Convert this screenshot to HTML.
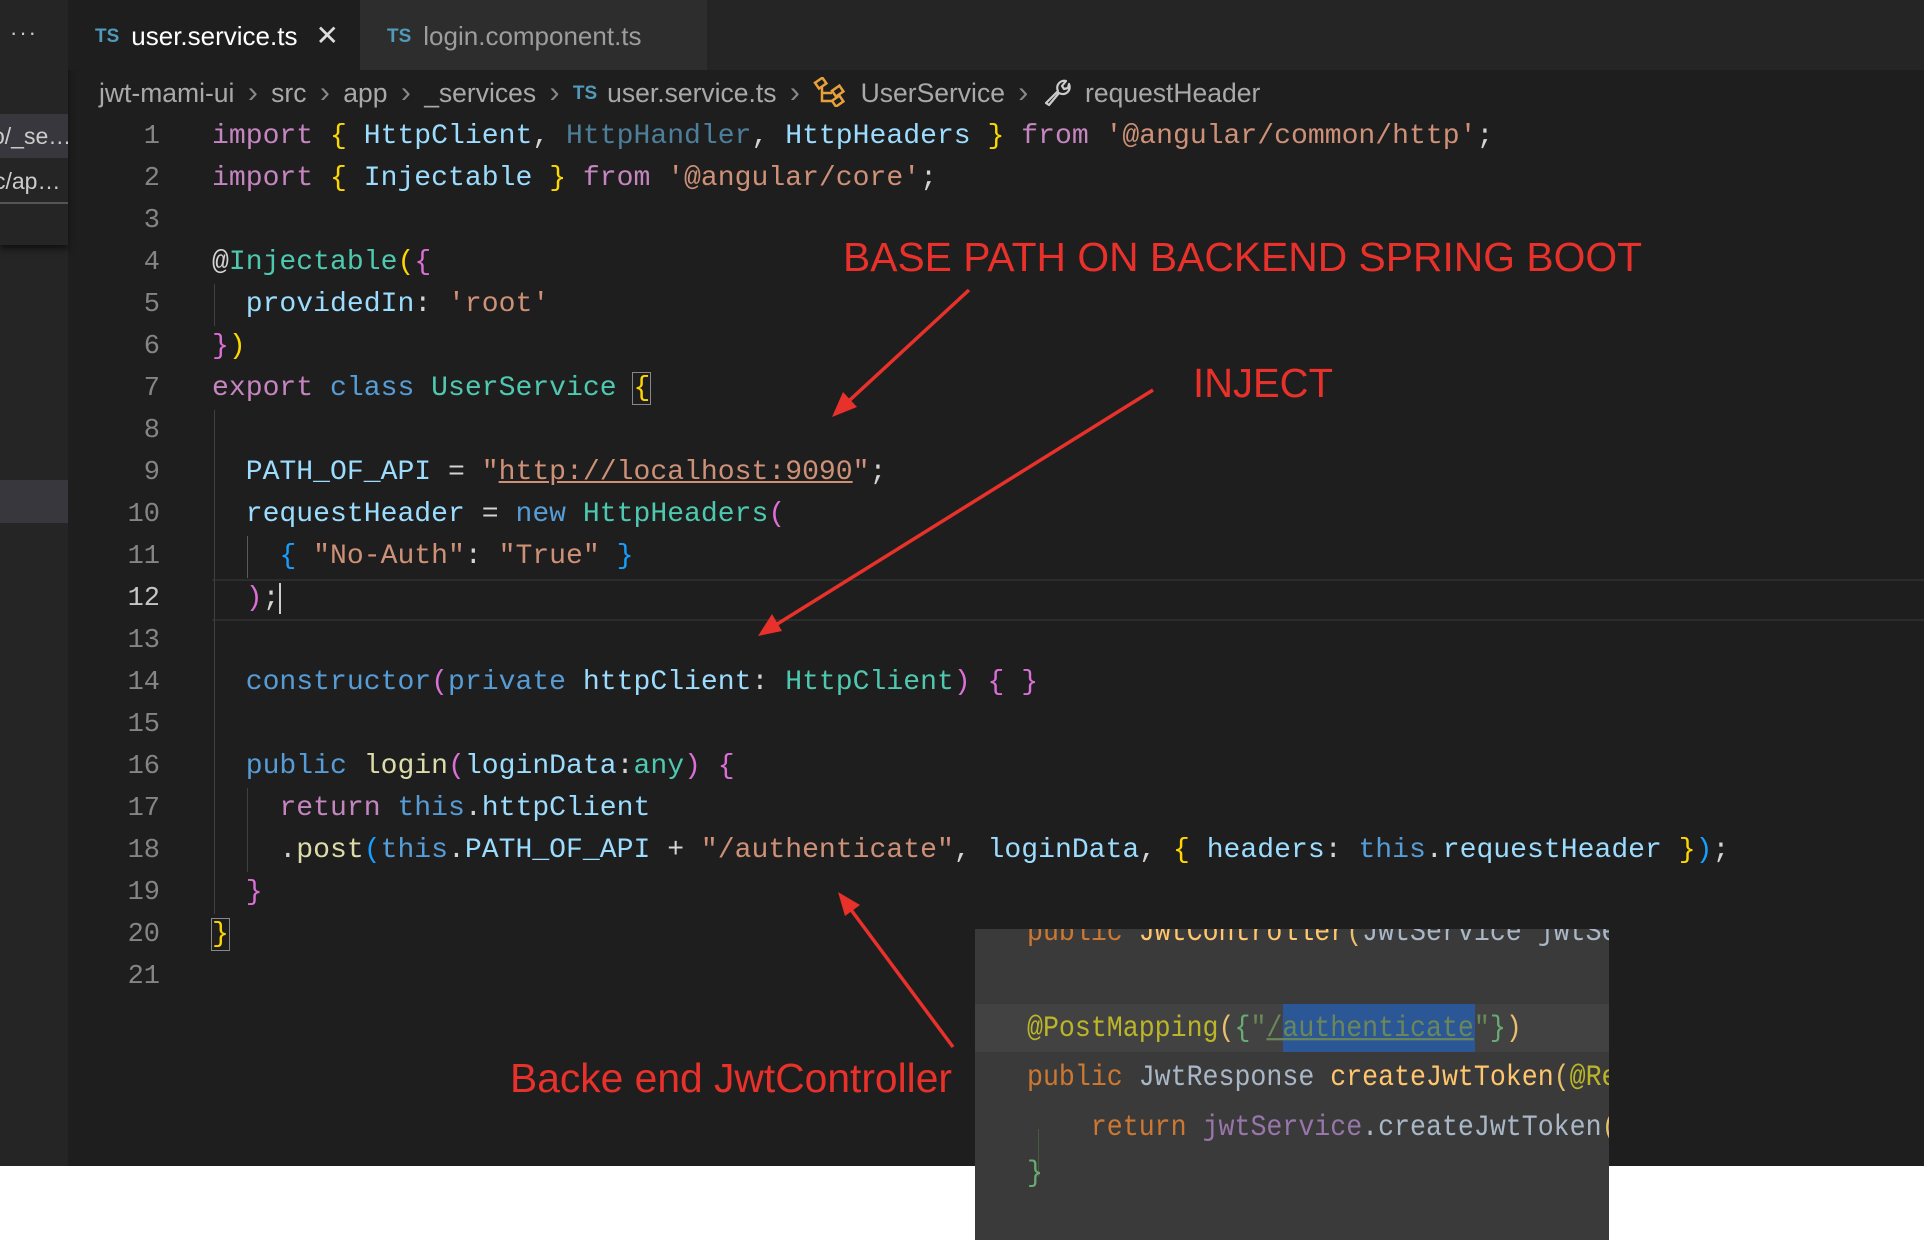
<!DOCTYPE html>
<html><head><meta charset="utf-8"><style>
*{margin:0;padding:0;box-sizing:border-box}
body{width:1924px;height:1259px;background:#fff;position:relative;overflow:hidden;font-family:"Liberation Sans",sans-serif}
.abs{position:absolute}
#dark{left:0;top:0;width:1924px;height:1166px;background:#1e1e1e}
#side{left:0;top:0;width:68px;height:1166px;background:#252526}
#tabs{left:68px;top:0;width:1856px;height:70px;background:#252526}
.tab{top:0;height:70px;font-size:26px;line-height:72px;padding-left:27px;white-space:nowrap}
.ts{color:#519aba;font-size:19px;font-weight:bold;margin-right:12px;position:relative;top:-3px}
.ln{position:absolute;left:100px;width:60px;text-align:right;font-family:"Liberation Mono",monospace;font-size:27px;color:#858585;height:42px;line-height:42px}
.cl{position:absolute;left:212px;font-family:"Liberation Mono",monospace;font-size:28.1px;color:#d4d4d4;height:42px;line-height:42px;white-space:pre}
.k{color:#c586c0}.y{color:#ffd700}.v{color:#9cdcfe}.c{color:#4ec9b0}.s{color:#ce9178}.b{color:#569cd6}.f{color:#dcdcaa}.p{color:#da70d6}.bl{color:#179fff}.d{color:#4d7f9b}
.g{position:absolute;width:1px;background:#404040}
#ov{left:975px;top:929px;width:634px;height:311px;background:#3a3a3a;overflow:hidden}
.oc{position:absolute;left:52px;font-family:"Liberation Mono",monospace;font-size:26.6px;white-space:pre;height:48px;line-height:48px;color:#a9b7c6;transform:scaleY(1.12);transform-origin:0 50%}
#code{position:absolute;left:0;top:3px;width:1924px;height:1000px}
</style></head><body>
<div id="dark" class="abs"></div>
<div id="side" class="abs">
 <div class="abs" style="left:0;top:0;width:68px;height:245px;background:#252526;box-shadow:0 4px 6px #111"></div>
 <div class="abs" style="left:10px;top:20px;color:#ccc;font-size:22px;letter-spacing:2px">···</div>
 <div class="abs" style="left:0;top:114px;width:68px;height:44px;background:#37373d;color:#ccc;font-size:23px;line-height:44px;white-space:nowrap;overflow:hidden;text-indent:-8px">o/_se…</div>
 <div class="abs" style="left:0;top:160px;width:68px;height:42px;color:#ccc;font-size:23px;line-height:42px;white-space:nowrap;overflow:hidden;text-indent:-6px">c/ap…</div>
 <div class="abs" style="left:0;top:202px;width:68px;height:2px;background:#555"></div>
 <div class="abs" style="left:0;top:480px;width:68px;height:43px;background:#37373d"></div>
</div>
<div id="tabs" class="abs">
 <div class="tab abs" style="left:0;width:292px;background:#1e1e1e;color:#fff"><span class="ts">TS</span>user.service.ts<span style="margin-left:18px;color:#ddd;font-size:28px">✕</span></div>
 <div class="tab abs" style="left:292px;width:347px;background:#2d2d2d;color:#9d9d9d"><span class="ts">TS</span>login.component.ts</div>
</div>
<div class="abs" style="left:99px;top:76px;font-size:26.5px;color:#a9a9a9;white-space:nowrap;line-height:34px;word-spacing:6px">jwt-mami-ui <span style="color:#888;font-size:30px">›</span> src <span style="color:#888;font-size:30px">›</span> app <span style="color:#888;font-size:30px">›</span> _services <span style="color:#888;font-size:30px">›</span> <span class="ts" style="font-size:19px;margin-right:10px">TS</span>user.service.ts <span style="color:#888;font-size:30px">›</span> <svg width="34" height="30" viewBox="0 0 34 30" style="vertical-align:-5px"><g fill="none" stroke="#e8a13a" stroke-width="2.5"><rect x="3" y="3" width="9" height="7" transform="rotate(-35 7 6)"/><rect x="20" y="11" width="9" height="7" transform="rotate(-35 24 14)"/><rect x="20" y="21" width="9" height="7" transform="rotate(-35 24 24)"/><path d="M9 10 V24 H19 M9 16 H19"/></g></svg> UserService <span style="color:#888;font-size:30px">›</span> <svg width="30" height="30" viewBox="0 0 30 30" style="vertical-align:-5px"><path d="M4 26 L16 14 A7 7 0 0 1 24 4 L20 9 L22 12 L26 11 L27 7 A7 7 0 0 1 17 16 L7 28 Z" fill="none" stroke="#ccc" stroke-width="2.2" stroke-linejoin="round"/></svg> requestHeader</div>

<div id="code">
<div class="abs" style="left:212px;top:576px;width:1712px;height:42px;border-top:2px solid #2c2c2c;border-bottom:2px solid #2c2c2c"></div>
<div class="g" style="left:214px;top:281px;height:42px"></div>
<div class="g" style="left:214px;top:407px;height:504px"></div>
<div class="g" style="left:247px;top:533px;height:42px;background:#5a5a5a"></div>
<div class="g" style="left:247px;top:785px;height:84px"></div>

<div class="ln" style="top:113px">1</div><div class="cl" style="top:113px"><span class="k">import</span> <span class="y">{</span> <span class="v">HttpClient</span>, <span class="d">HttpHandler</span>, <span class="v">HttpHeaders</span> <span class="y">}</span> <span class="k">from</span> <span class="s">'@angular/common/http'</span>;</div>
<div class="ln" style="top:155px">2</div><div class="cl" style="top:155px"><span class="k">import</span> <span class="y">{</span> <span class="v">Injectable</span> <span class="y">}</span> <span class="k">from</span> <span class="s">'@angular/core'</span>;</div>
<div class="ln" style="top:197px">3</div>
<div class="ln" style="top:239px">4</div><div class="cl" style="top:239px">@<span class="c">Injectable</span><span class="y">(</span><span class="p">{</span></div>
<div class="ln" style="top:281px">5</div><div class="cl" style="top:281px">  <span class="v">providedIn</span>: <span class="s">'root'</span></div>
<div class="ln" style="top:323px">6</div><div class="cl" style="top:323px"><span class="p">}</span><span class="y">)</span></div>
<div class="ln" style="top:365px">7</div><div class="cl" style="top:365px"><span class="k">export</span> <span class="b">class</span> <span class="c">UserService</span> <span class="y" style="outline:1px solid #888">{</span></div>
<div class="ln" style="top:407px">8</div>
<div class="ln" style="top:449px">9</div><div class="cl" style="top:449px">  <span class="v">PATH_OF_API</span> = <span class="s">"<u>http://localhost:9090</u>"</span>;</div>
<div class="ln" style="top:491px">10</div><div class="cl" style="top:491px">  <span class="v">requestHeader</span> = <span class="b">new</span> <span class="c">HttpHeaders</span><span class="p">(</span></div>
<div class="ln" style="top:533px">11</div><div class="cl" style="top:533px">    <span class="bl">{</span> <span class="s">"No-Auth"</span>: <span class="s">"True"</span> <span class="bl">}</span></div>
<div class="ln" style="top:575px;color:#c6c6c6">12</div><div class="cl" style="top:575px">  <span class="p">)</span>;<span style="border-left:2px solid #ccc"></span></div>
<div class="ln" style="top:617px">13</div>
<div class="ln" style="top:659px">14</div><div class="cl" style="top:659px">  <span class="b">constructor</span><span class="p">(</span><span class="b">private</span> <span class="v">httpClient</span>: <span class="c">HttpClient</span><span class="p">) { }</span></div>
<div class="ln" style="top:701px">15</div>
<div class="ln" style="top:743px">16</div><div class="cl" style="top:743px">  <span class="b">public</span> <span class="f">login</span><span class="p">(</span><span class="v">loginData</span>:<span class="c">any</span><span class="p">)</span> <span class="p">{</span></div>
<div class="ln" style="top:785px">17</div><div class="cl" style="top:785px">    <span class="k">return</span> <span class="b">this</span>.<span class="v">httpClient</span></div>
<div class="ln" style="top:827px">18</div><div class="cl" style="top:827px">    .<span class="f">post</span><span class="bl">(</span><span class="b">this</span>.<span class="v">PATH_OF_API</span> + <span class="s">"/authenticate"</span>, <span class="v">loginData</span>, <span class="y">{</span> <span class="v">headers</span>: <span class="b">this</span>.<span class="v">requestHeader</span> <span class="y">}</span><span class="bl">)</span>;</div>
<div class="ln" style="top:869px">19</div><div class="cl" style="top:869px">  <span class="p">}</span></div>
<div class="ln" style="top:911px">20</div><div class="cl" style="top:911px"><span class="y" style="outline:1px solid #888">}</span></div>
<div class="ln" style="top:953px">21</div>
</div>

<div id="ov" class="abs">
 <div class="oc" style="top:-21px"><span style="color:#cc7832">public</span> <span style="color:#ffc66d">JwtController</span><span style="color:#e8bf6a">(</span>JwtService jwtService</div>
 <div class="abs" style="left:0;top:75px;width:634px;height:48px;background:#424242"></div>
 <div class="abs" style="left:308px;top:75px;width:192px;height:48px;background:#2b5797"></div>
 <div class="oc" style="top:75px"><span style="color:#bbb529">@PostMapping</span><span style="color:#e8bf6a">(</span><span style="color:#6aab73">{</span><span style="color:#6a8759">"<u>/authenticate</u>"</span><span style="color:#6aab73">}</span><span style="color:#e8bf6a">)</span></div>
 <div class="oc" style="top:124px"><span style="color:#cc7832">public</span> JwtResponse <span style="color:#ffc66d">createJwtToken</span><span style="color:#e8bf6a">(</span><span style="color:#bbb529">@RequestBody</span></div>
 <div class="abs" style="left:63px;top:200px;width:1px;height:48px;background:#4a5a40"></div>
 <div class="oc" style="top:174px">    <span style="color:#cc7832">return</span> <span style="color:#9876aa">jwtService</span>.createJwtToken<span style="color:#e8bf6a">(</span></div>
 <div class="oc" style="top:220px"><span style="color:#6aab73">}</span></div>
</div>

<svg class="abs" style="left:0;top:0" width="1924" height="1259">
 <g stroke="#e8312a" stroke-width="3.5" fill="#e8312a">
  <line x1="969" y1="290" x2="838" y2="411"/>
  <polygon points="832,417 843,392 857,407" stroke="none"/>
  <line x1="1153" y1="390" x2="766" y2="631"/>
  <polygon points="758,636 772,614 782,631" stroke="none"/>
  <line x1="953" y1="1047" x2="843" y2="899"/>
  <polygon points="838,892 860,905 845,916" stroke="none"/>
 </g>
 <g fill="#e8312a" font-family="Liberation Sans, sans-serif" font-size="41">
  <text x="843" y="271" textLength="799" lengthAdjust="spacingAndGlyphs">BASE PATH ON BACKEND SPRING BOOT</text>
  <text x="1193" y="397" textLength="140" lengthAdjust="spacingAndGlyphs">INJECT</text>
  <text x="510" y="1092" textLength="442" lengthAdjust="spacingAndGlyphs">Backe end JwtController</text>
 </g>
</svg>
</body></html>
